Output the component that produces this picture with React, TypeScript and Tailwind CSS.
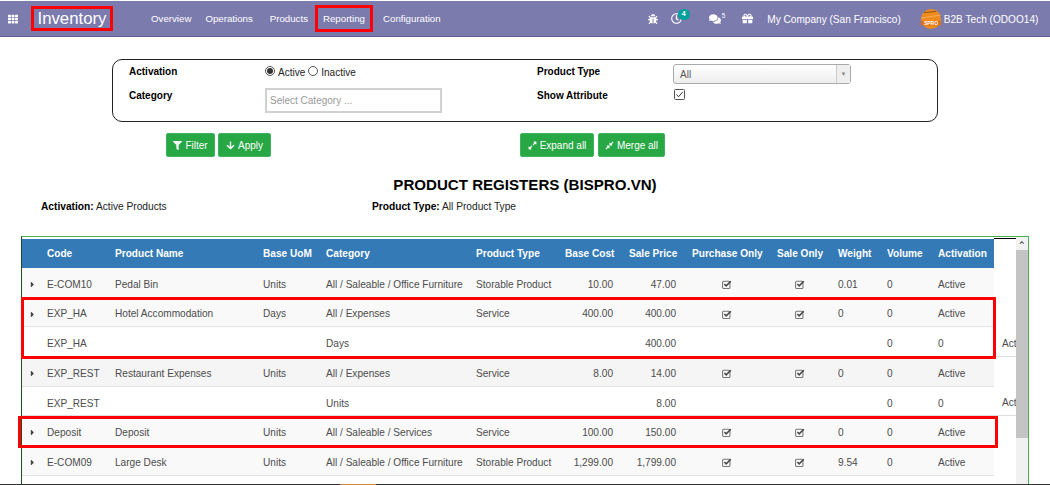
import { FaArrowDown, FaBug, FaCaretRight, FaComments, FaCompressAlt, FaExpandAlt, FaFilter, FaGift, FaRegClock, FaTh } from "react-icons/fa";

type Row = {
  code: string;
  name: string;
  uom: string;
  category: string;
  type: string;
  cost: string;
  price: string;
  weight: string;
  sub?: boolean;
  hover?: boolean;
};

const rows: Row[] = [
  { code: "E-COM10", name: "Pedal Bin", uom: "Units", category: "All / Saleable / Office Furniture", type: "Storable Product", cost: "10.00", price: "47.00", weight: "0.01" },
  { code: "EXP_HA", name: "Hotel Accommodation", uom: "Days", category: "All / Expenses", type: "Service", cost: "400.00", price: "400.00", weight: "0" },
  { code: "EXP_HA", name: "", uom: "", category: "Days", type: "", cost: "", price: "400.00", weight: "", sub: true },
  { code: "EXP_REST", name: "Restaurant Expenses", uom: "Units", category: "All / Expenses", type: "Service", cost: "8.00", price: "14.00", weight: "0", hover: true },
  { code: "EXP_REST", name: "", uom: "", category: "Units", type: "", cost: "", price: "8.00", weight: "", sub: true },
  { code: "Deposit", name: "Deposit", uom: "Units", category: "All / Saleable / Services", type: "Service", cost: "100.00", price: "150.00", weight: "0" },
  { code: "E-COM09", name: "Large Desk", uom: "Units", category: "All / Saleable / Office Furniture", type: "Storable Product", cost: "1,299.00", price: "1,799.00", weight: "9.54" },
];

const colWidths = [17, 68, 148, 63, 150, 89, 64, 63, 85, 61, 49, 51, 64, 40];
const headers = ["Code", "Product Name", "Base UoM", "Category", "Product Type", "Base Cost", "Sale Price", "Purchase Only", "Sale Only", "Weight", "Volume", "Activation"];
const rightAligned = ["Base Cost", "Sale Price"];

const Check = () => (
  <svg width="10" height="9" viewBox="0 0 12 11" className="mx-auto">
    <rect x="0.6" y="1.6" width="9" height="8.8" rx="1.2" fill="none" stroke="#777" strokeWidth="1.3" />
    <path d="M2.8 5 L5 7.2 L10.6 1.6" fill="none" stroke="#444" strokeWidth="1.8" />
  </svg>
);

const GreenButton = ({ icon, label, className }: { icon: React.ReactNode; label: string; className: string }) => (
  <button className={`flex h-[24px] items-center justify-center gap-[3px] rounded-[2px] border border-[#3fb35c] bg-[#28a745] text-[10px] text-white ${className}`}>
    {icon}
    {label}
  </button>
);

const App = () => {
  return (
    <div className="flex h-[485px] w-[1050px] flex-col overflow-hidden bg-white font-['Liberation_Sans',Arial,sans-serif] text-[10px] text-[#333]">
      {/* navbar */}
      <div className="mt-px flex h-[36px] items-center border-b border-[#5f5e97] bg-[#7c7bad] text-[9.7px] text-white">
        <FaTh className="ml-[8px] text-[10px]" />
        <div className="ml-[13px] flex h-[25px] w-[82px] items-center justify-center border-[3px] border-[#fe0000] pt-px text-[16.8px]">Inventory</div>
        <div className="ml-[38px] pt-[2px]">Overview</div>
        <div className="ml-[14px] pt-[2px]">Operations</div>
        <div className="ml-[17px] pt-[2px]">Products</div>
        <div className="ml-[7px] flex h-[27px] w-[58px] items-center justify-center border-[3px] border-[#fe0000] pt-[2px]">Reporting</div>
        <div className="ml-[10px] pt-[2px]">Configuration</div>
        <FaBug className="ml-[207px] text-[10px]" />
        <div className="relative ml-[13px]">
          <FaRegClock className="text-[11px]" />
          <span className="absolute -top-[4px] left-[7px] flex h-[11px] w-[12px] items-center justify-center rounded-full bg-[#00a09d] text-[7px] font-bold">4</span>
        </div>
        <FaComments className="ml-[27px] text-[12px]" />
        <span className="mb-[5px] ml-[1px] text-[6.5px]">5</span>
        <FaGift className="ml-[17px] text-[11px]" />
        <div className="ml-[14px] pt-[2px] text-[10.1px]">My Company (San Francisco)</div>
        <svg width="20" height="20" viewBox="0 0 20 20" className="ml-[20px]">
          <circle cx="10" cy="10" r="10" fill="#ef8a1c" />
          <path d="M3 3.5 L15 2.5" stroke="#5a3a10" strokeWidth="0.7" />
          <path d="M0 9 L20 6" stroke="#f8c48a" strokeWidth="0.6" />
          <rect x="0" y="12" width="20" height="4.5" fill="#e0700f" />
          <text x="10" y="16" textAnchor="middle" fontSize="5" fontWeight="700" fill="#fff">SPRO</text>
        </svg>
        <div className="ml-[3px] pt-[2px] text-[10.1px]">B2B Tech (ODOO14)</div>
      </div>

      {/* filter box */}
      <div className="ml-[112px] mt-[22px] grid h-[63px] w-[826px] grid-cols-[136px_272px_136px_1fr] grid-rows-[28px_1fr] rounded-[10px] border border-[#222] pl-[16px]">
        <div className="pt-[4px] font-bold text-black">Activation</div>
        <div className="flex items-start gap-[3px] pt-[5px] text-[#222]">
          <span className="mt-[1px] flex h-[10px] w-[10px] items-center justify-center rounded-full border border-[#555]">
            <span className="h-[6px] w-[6px] rounded-full bg-[#333]" />
          </span>
          Active
          <span className="mt-[1px] h-[10px] w-[10px] rounded-full border border-[#555]" />
          Inactive
        </div>
        <div className="pt-[4px] font-bold text-black">Product Type</div>
        <div className="pt-[4px]">
          <div className="flex h-[20px] w-[178px] items-center justify-between rounded-[3px] border border-[#aaa] bg-gradient-to-b from-white to-[#eeeeee] pl-[6px] text-[#555]">
            All
            <span className="flex h-full w-[14px] items-center justify-center border-l border-[#ccc] bg-[#eee] text-[6px] text-[#888]">▼</span>
          </div>
        </div>
        <div className="font-bold text-black">Category</div>
        <div>
          <div className="flex h-[25px] w-[177px] items-center border-2 border-[#d0d0d0] pl-[3px] text-[#999]">Select Category ...</div>
        </div>
        <div className="font-bold text-black">Show Attribute</div>
        <div className="pt-px">
          <svg width="11" height="11" viewBox="0 0 11 11" className="ml-px">
            <rect x="0.5" y="0.5" width="10" height="10" rx="1" fill="#fff" stroke="#555" />
            <path d="M2.5 5.5 L4.5 7.8 L8.8 2.8" fill="none" stroke="#333" strokeWidth="1" />
          </svg>
        </div>
      </div>

      {/* buttons */}
      <div className="ml-[166px] mt-[11px] flex">
        <GreenButton className="w-[49px]" icon={<FaFilter className="text-[9px]" />} label="Filter" />
        <GreenButton className="ml-[3px] w-[53px]" icon={<FaArrowDown className="text-[9px]" />} label="Apply" />
        <GreenButton className="ml-[249px] w-[74px]" icon={<FaExpandAlt className="text-[9px]" />} label="Expand all" />
        <GreenButton className="ml-[4px] w-[67px]" icon={<FaCompressAlt className="text-[9px]" />} label="Merge all" />
      </div>

      <h1 className="mt-[19px] text-center text-[15.1px] leading-[18px] font-bold text-black">PRODUCT REGISTERS (BISPRO.VN)</h1>

      <div className="ml-[41px] mt-[7px] flex text-[10.2px] leading-[12px] text-[#222]">
        <div className="w-[331px]">
          <b className="text-black">Activation:</b> Active Products
        </div>
        <div>
          <b className="text-black">Product Type:</b> All Product Type
        </div>
      </div>

      {/* table panel */}
      <div className="relative ml-[21px] mt-[23px] flex min-h-0 w-[1008px] flex-1 border-t border-r border-l border-t-[#4caf50] border-r-[#4caf50] border-l-[#1d4d24]">
        <div className="min-w-0 flex-1 overflow-hidden pt-px">
          <table className="w-[1011px] table-fixed border-collapse text-[10.1px] text-[#4c4c4c]">
            <colgroup>
              {colWidths.map((w, i) => (
                <col key={i} style={{ width: w }} />
              ))}
            </colgroup>
            <thead>
              <tr className="h-[29px]">
                <th className="bg-[#337ab7]" />
                {headers.map((h) => (
                  <th key={h} className={`bg-[#337ab7] px-[8px] pt-[2px] text-[10.1px] font-bold whitespace-nowrap text-white ${rightAligned.includes(h) ? "text-right" : "text-left"}`}>
                    {h}
                  </th>
                ))}
                <th className="border-t border-black" />
              </tr>
            </thead>
            <tbody className="[&_td]:pt-[4px]">
              {rows.map((r, i) =>
                r.sub ? (
                  <tr key={i} className="h-[29.7px] border-b border-[#ddd] bg-white">
                    <td />
                    <td className="px-[8px]">{r.code}</td>
                    <td />
                    <td />
                    <td className="px-[8px]">{r.category}</td>
                    <td />
                    <td />
                    <td className="px-[8px] text-right">{r.price}</td>
                    <td />
                    <td />
                    <td />
                    <td className="px-[8px]">0</td>
                    <td className="px-[8px]">0</td>
                    <td className="px-[8px]">Active</td>
                  </tr>
                ) : (
                  <tr key={i} className="h-[29.7px]">
                    <td className={`border-b border-[#e4e4e4] pl-[6px] ${r.hover ? "bg-[#f5f5f5]" : "bg-[#f9f9f9]"}`}>
                      <FaCaretRight className="text-[9px] text-[#444]" />
                    </td>
                    {[r.code, r.name, r.uom, r.category, r.type].map((v, j) => (
                      <td key={j} className={`border-b border-[#e4e4e4] px-[8px] whitespace-nowrap ${r.hover ? "bg-[#f5f5f5]" : "bg-[#f9f9f9]"}`}>
                        {v}
                      </td>
                    ))}
                    {[r.cost, r.price].map((v, j) => (
                      <td key={j} className={`border-b border-[#e4e4e4] px-[8px] text-right whitespace-nowrap ${r.hover ? "bg-[#f5f5f5]" : "bg-[#f9f9f9]"}`}>
                        {v}
                      </td>
                    ))}
                    <td className={`border-b border-[#e4e4e4] ${r.hover ? "bg-[#f5f5f5]" : "bg-[#f9f9f9]"}`}>
                      <Check />
                    </td>
                    <td className={`border-b border-[#e4e4e4] ${r.hover ? "bg-[#f5f5f5]" : "bg-[#f9f9f9]"}`}>
                      <Check />
                    </td>
                    {[r.weight, "0", "Active"].map((v, j) => (
                      <td key={j} className={`border-b border-[#e4e4e4] px-[8px] ${r.hover ? "bg-[#f5f5f5]" : "bg-[#f9f9f9]"}`}>
                        {v}
                      </td>
                    ))}
                    <td />
                  </tr>
                )
              )}
            </tbody>
          </table>
        </div>

        {/* scrollbar */}
        <div className="flex w-[12px] flex-col bg-[#f1f1f1]">
          <div className="flex h-[13px] items-center justify-center pt-[3px] text-[9px] leading-none font-bold text-[#555]">⌃</div>
          <div className="h-[188px] bg-[#c4c4c4]" />
        </div>

        {/* red highlight boxes */}
        <div className="absolute top-[60px] left-[-1px] h-[62px] w-[975px] border-[3px] border-[#fe0000]" />
        <div className="absolute top-[179px] left-[-4px] h-[32px] w-[980px] border-[3px] border-[#fe0000]" />
      </div>

      {/* page edge */}
      <div className="flex h-px shrink-0 bg-[#333]">
        <div className="ml-[340px] w-[36px] bg-[#c98a3a]" />
      </div>
    </div>
  );
};

export default App;
